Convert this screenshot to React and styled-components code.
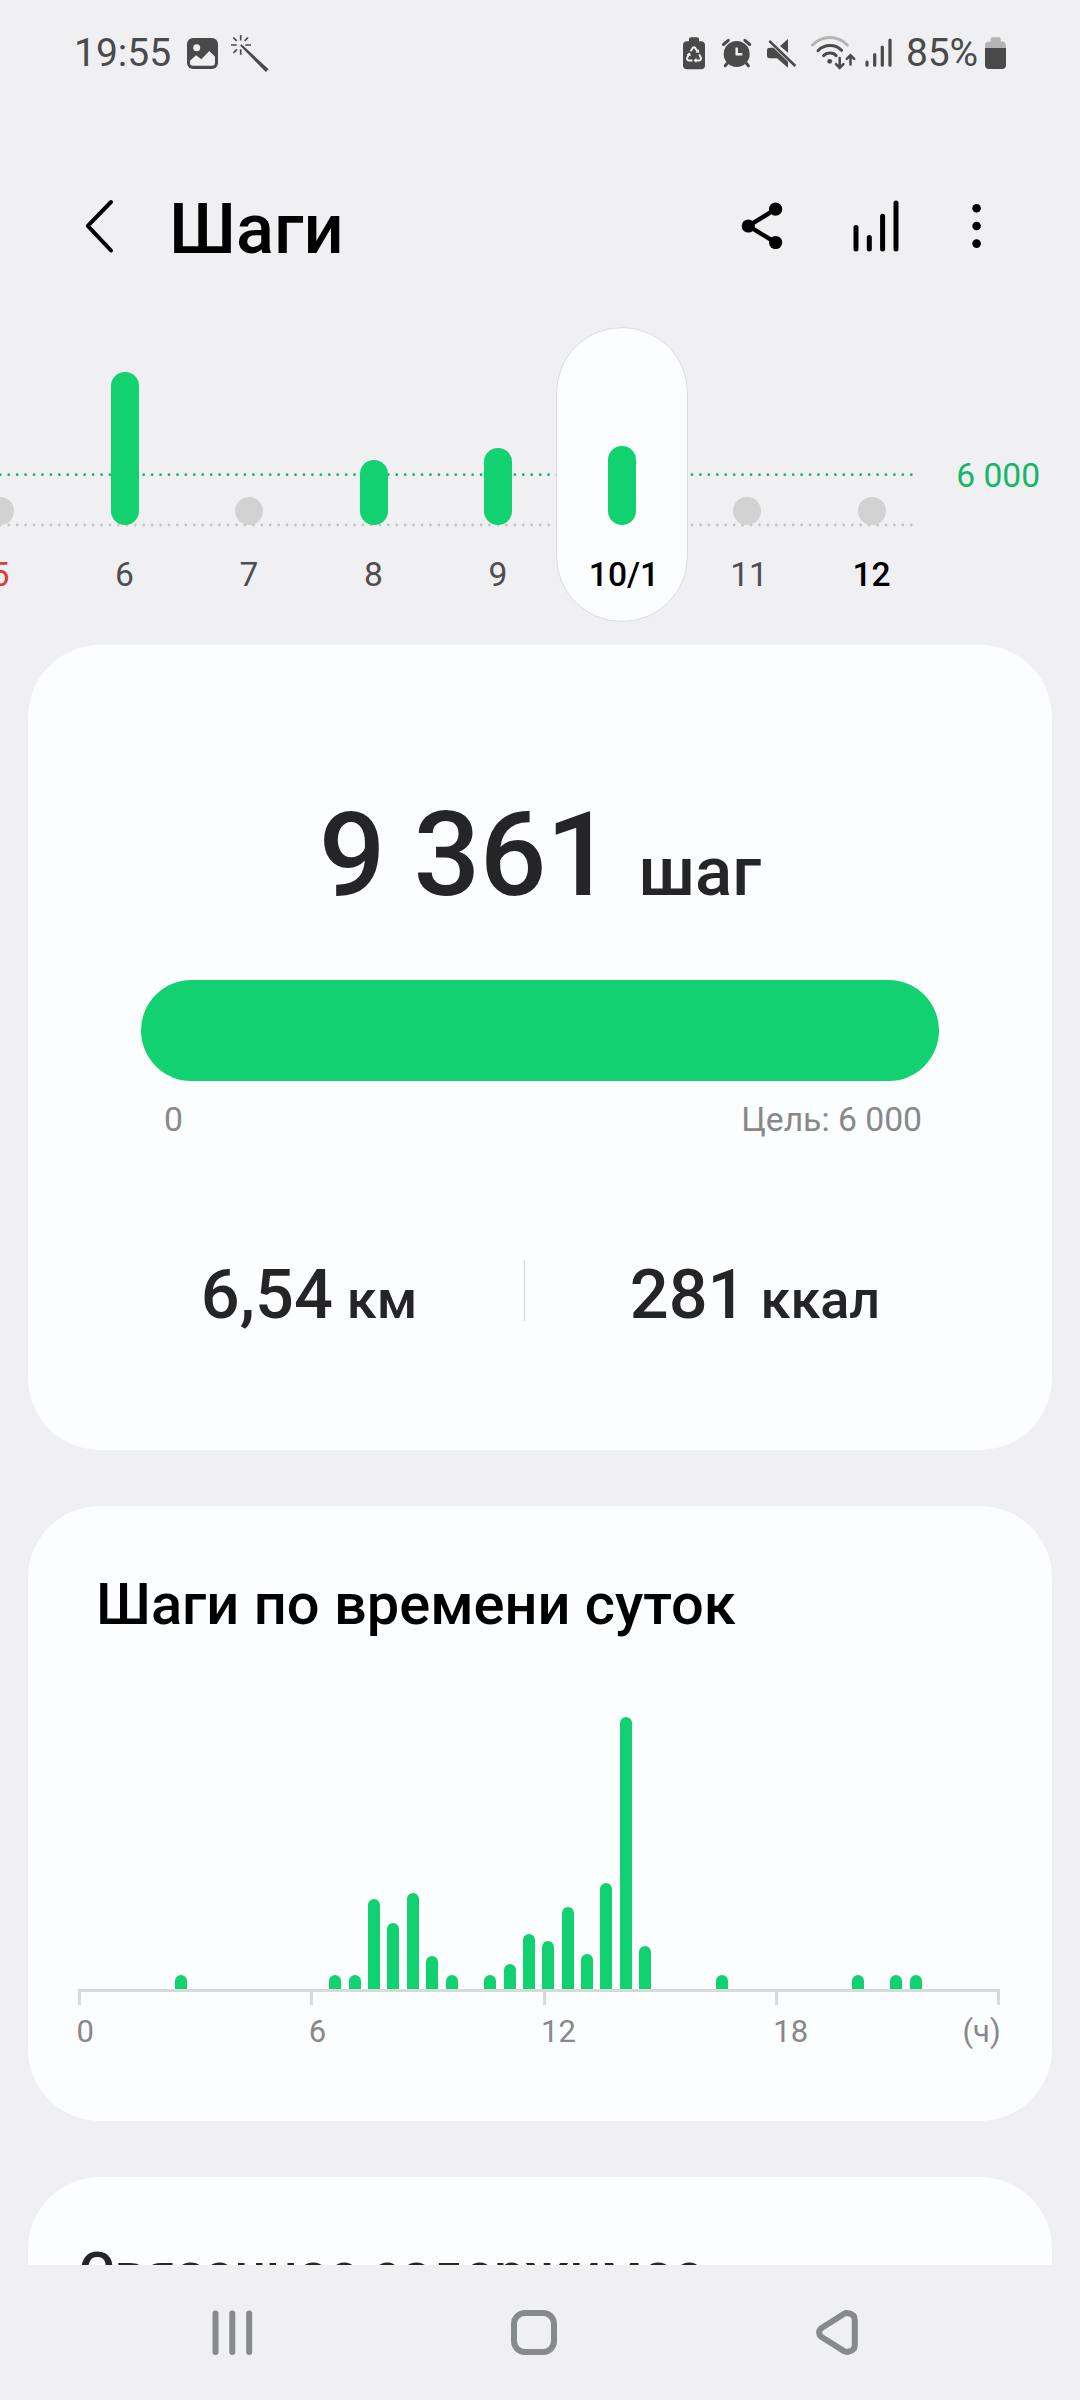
import React from 'react';
import styled, { createGlobalStyle } from 'styled-components';

const GlobalStyle = createGlobalStyle`
  body {
    margin: 0;
    background-color: #f0f0f2;
    font-family: Roboto, "Liberation Sans", sans-serif;
  }
  * {
    box-sizing: border-box;
  }
`;

const Tela = styled.div`
  display: flex;
  flex-direction: column;
  width: 1080px;
  height: 2400px;
  overflow: hidden;
  background-color: #f0f0f2;
`;

const BarraStatus = styled.div`
  display: flex;
  align-items: center;
  flex: none;
  height: 106px;
  padding: 0 73px 0 74px;
  color: #4a4a4a;
  font-size: 39px;
  white-space: nowrap;
`;

const Icone = styled.svg`
  display: block;
  flex: none;
  overflow: visible;
  margin-left: ${(props) => props.$ml || 0}px;
`;

const Espaco = styled.div`
  flex: 1;
`;

const Bateria = styled.span`
  width: 79px;
  margin-left: 13px;
  letter-spacing: -0.2px;
`;

const Cabecalho = styled.header`
  display: flex;
  align-items: center;
  flex: none;
  height: 221px;
  padding: 25px 99px 0 84px;
`;

const Titulo = styled.h1`
  margin: 0 0 0 53px;
  font-size: 70.5px;
  font-weight: 500;
  line-height: 80px;
  color: #000;
`;

const Semana = styled.div`
  position: relative;
  display: flex;
  flex: none;
  height: 295px;
  margin-bottom: 23px;
`;

const Linhas = styled.svg`
  position: absolute;
  left: 0;
  top: 0;
`;

const Dias = styled.div`
  position: relative;
  display: flex;
  flex: none;
  margin-left: -62.25px;
`;

const Dia = styled.div`
  display: flex;
  flex-direction: column;
  align-items: center;
  width: 124.5px;
  height: 295px;
`;

const DiaAtual = styled(Dia)`
  width: 132px;
  margin: 0 -3.25px 0 -4.25px;
  border: 1px solid #dcdcde;
  border-radius: 66px;
  background-color: #fcfdff;
`;

const AreaBarra = styled.div`
  display: flex;
  align-items: flex-end;
  height: ${(props) => (props.$atual ? 197 : 198)}px;
`;

const BarraDia = styled.div`
  width: 28px;
  height: ${(props) => props.$altura}px;
  border-radius: 14px;
  background-color: ${(props) => (props.$vazio ? '#d2d2d2' : '#12d170')};
`;

const NomeDia = styled.span`
  margin: 30px 0 0 ${(props) => props.$ml || 0}px;
  line-height: 40px;
  font-size: 33.6px;
  font-weight: ${(props) => (props.$forte ? 500 : 400)};
  color: ${(props) => props.$cor || '#4e4e52'};
`;

const Meta = styled.span`
  margin: 129px 0 0 22.5px;
  line-height: 40px;
  font-size: 33.6px;
  color: #16b569;
`;

const Conteudo = styled.main`
  display: flex;
  flex-direction: column;
  flex: 1;
  gap: 56px;
  min-height: 0;
  padding: 0 28px;
  overflow: hidden;
`;

const Cartao = styled.section`
  flex: none;
  height: ${(props) => props.$altura}px;
  padding-top: ${(props) => props.$topo}px;
  border-radius: 72px;
  background-color: #fcfdff;
`;

const Total = styled.div`
  display: flex;
  justify-content: center;
  align-items: baseline;
  gap: 26.5px;
  height: 120px;
  line-height: 120px;
  font-size: 117.5px;
  font-weight: 500;
  letter-spacing: -0.6px;
  color: #252528;
`;

const Unidade = styled.span`
  font-size: ${(props) => props.$tamanho}px;
  letter-spacing: 0;
`;

const Progresso = styled.div`
  height: 101px;
  margin: 65px 113px 0;
  border-radius: 50.5px;
  background-color: #12d170;
`;

const Limites = styled.div`
  display: flex;
  justify-content: space-between;
  margin: 19px 130px 0 136px;
  line-height: 40px;
  font-size: 33.7px;
  color: #88888a;
`;

const Resumo = styled.div`
  display: flex;
  height: 61px;
  margin: 120px 0 0 66px;
`;

const Valor = styled.div`
  display: flex;
  justify-content: center;
  align-items: baseline;
  gap: 14px;
  width: ${(props) => props.$largura}px;
  line-height: 69px;
  font-size: 68.5px;
  font-weight: 500;
  color: #252528;
`;

const Divisor = styled.div`
  width: 1px;
  height: 61px;
  background-color: #d4d4d6;
`;

const Subtitulo = styled.h2`
  margin: 0 0 0 ${(props) => props.$esquerda}px;
  line-height: 68px;
  font-size: ${(props) => props.$tamanho}px;
  font-weight: 500;
  color: ${(props) => props.$cor || '#000'};
  white-space: nowrap;
`;

const Grafico = styled.div`
  display: grid;
  grid-template-columns: repeat(48, 19.35px);
  justify-items: center;
  align-items: end;
  height: 282px;
  margin: 69px 0 0 46.3px;
`;

const BarraHora = styled.div`
  width: 12px;
  height: ${(props) => props.$altura}px;
  border-radius: 6px 6px 0 0;
  background-color: #12d170;
`;

const Eixo = styled.div`
  display: grid;
  grid-template-columns: 232.3px 232.3px 232.3px 1fr;
  width: 921.5px;
  height: 16px;
  margin-left: 50px;
  border-top: 3px solid #d9d9d9;
  border-right: 3px solid #d9d9d9;
`;

const Marca = styled.div`
  border-left: 3px solid #d9d9d9;
`;

const Horas = styled.div`
  display: grid;
  grid-template-columns: 232.3px 232.3px 232.3px 1fr;
  width: 924.3px;
  margin: 9px 0 0 48.4px;
  line-height: 36px;
  font-size: 31px;
  color: #88888a;
`;

const UnidadeHora = styled.span`
  display: flex;
  justify-content: space-between;
`;

const Navegacao = styled.nav`
  display: flex;
  align-items: center;
  flex: none;
  height: 135px;
  padding: 0 222px 0 211px;
`;

const dias = [
  { nome: '5', altura: 28, vazio: true, cor: '#d5413a' },
  { nome: '6', altura: 153 },
  { nome: '7', altura: 28, vazio: true },
  { nome: '8', altura: 65 },
  { nome: '9', altura: 77 },
  { nome: '10/1', altura: 79, cor: '#000', forte: true, atual: true, ml: 4 },
  { nome: '11', altura: 28, vazio: true, ml: 4 },
  { nome: '12', altura: 28, vazio: true, cor: '#000', forte: true },
];

// meia hora -> altura da barra
const passos = {
  5: 14, 13: 14, 14: 14, 15: 90, 16: 66, 17: 96, 18: 33, 19: 14,
  21: 14, 22: 25, 23: 55, 24: 48, 25: 82, 26: 35, 27: 106, 28: 272,
  29: 43, 33: 14, 40: 14, 42: 14, 43: 14,
};

const meiasHoras = Array.from({ length: 48 }, (_, i) => passos[i] || 0);

function Status() {
  return (
    <BarraStatus>
      <span>19:55</span>
      <Espaco />
      <Icone $ml={-675} width="31" height="38" viewBox="0 0 31 38">
        <rect y="4" width="31" height="31" rx="6" fill="#4a4a4a" />
        <circle cx="9.7" cy="13.7" r="3.5" fill="#f0f0f2" />
        <path d="M3 26.7L9 21.3L14.3 25.2L22.3 17L28 22.7V28.5Q28 31.7 25 31.7H6Q3 31.7 3 28.5Z" fill="#f0f0f2" />
      </Icone>
      <Icone $ml={13} width="38" height="38" viewBox="0 0 38 38" fill="none" stroke="#4a4a4a" strokeWidth="1.7">
        <path d="M9.7 1V6.5M0 11H5.7M14.3 11H20M9.7 15.3V20.7M2.3 3.5L5.7 6.9M17 3.5L13.7 6.9M2.3 19L6 15.3" />
        <path d="M9 11.6L10.6 10.2L37.6 35.2L34.8 38Z" fill="#4a4a4a" stroke="none" />
      </Icone>
      <Icone $ml={414} width="22" height="38" viewBox="0 0 22 38">
        <path d="M6 8V5Q6 3.3 8 3.3H14Q16 3.3 16 5V8Z" fill="#4a4a4a" />
        <rect y="7.2" width="22" height="28" rx="4" fill="#4a4a4a" />
        <g fill="none" stroke="#f0f0f2" strokeWidth="2" strokeLinejoin="round">
          <path d="M7.6 17.2L9.6 14.2Q11 12.3 12.4 14.2L14.6 17.6" />
          <path d="M16.2 20.4L17.7 23.4Q18.6 26.3 16 26.6H12.6" />
          <path d="M9.4 26.6H6Q3.4 26.3 4.3 23.4L6.2 19.8" />
        </g>
        <path d="M12.6 18.4L16.2 18.8L16 15.2ZM13.4 23.8V29L10.6 26.5ZM3.6 20.4L7 18.6L7.8 22.2Z" fill="#f0f0f2" />
      </Icone>
      <Icone $ml={17} width="30" height="38" viewBox="0 0 30 38" fill="none" stroke="#4a4a4a" strokeLinecap="round">
        <circle cx="14.7" cy="20" r="13" fill="#4a4a4a" stroke="none" />
        <path d="M1.5 10.5L6.3 6.3M22.9 6.3L27.7 10.5M5 29.5L3.2 31.8M24.6 29.5L26.4 31.8" strokeWidth="3" />
        <path d="M14.7 13.5V20.3H20.3" stroke="#f0f0f2" strokeWidth="2.5" strokeLinecap="butt" />
      </Icone>
      <Icone $ml={15} width="30" height="38" viewBox="0 0 30 38" fill="#4a4a4a">
        <path d="M21 5V18.7L13 11.9Z" />
        <path d="M2.5 13.7H6.5L21 27.8V33.7L10 24.3H2.5Q0 24.3 0 22V16Q0 13.7 2.5 13.7Z" />
        <path d="M2.3 6.9L28.3 32" stroke="#4a4a4a" strokeWidth="2.6" />
      </Icone>
      <Icone $ml={14} width="45" height="38" viewBox="0 0 45 38" fill="none" stroke="#4a4a4a" strokeWidth="3" strokeLinecap="round">
        <path d="M1.5 11Q9 3.6 19 3.6T36.3 11" stroke="#b4b4b5" />
        <path d="M7 16.7Q12 11.6 19 11.6T30.6 16.3" />
        <path d="M12.5 21.7Q15 19 19 19T25.2 21.7" />
        <circle cx="18.7" cy="27.3" r="2.4" fill="#4a4a4a" stroke="none" />
        <path d="M28.7 24V33.6M25 30.2L28.7 33.9L32.4 30.2M39.5 30.6V21.5M35.8 24.9L39.5 21.2L43.2 24.9" strokeWidth="2.5" />
      </Icone>
      <Icone $ml={9} width="28" height="38" viewBox="0 0 28 38" stroke="#4a4a4a" strokeWidth="3.2" strokeLinecap="round">
        <path d="M2 28V31.2M9.7 20.5V31.2M17.3 13V31.2M25 6V31.2" />
      </Icone>
      <Bateria>85%</Bateria>
      <Icone width="22" height="38" viewBox="0 0 22 38">
        <path d="M5.5 8V5Q5.5 3.3 7.5 3.3H13.7Q15.7 3.3 15.7 5V7.5H17Q21 7.5 21 11.5V14H0V11.5Q0 7.5 4 7.5Z" fill="#b4b4b5" />
        <path d="M0 14H21V31Q21 35 17 35H4Q0 35 0 31Z" fill="#4a4a4a" />
      </Icone>
    </BarraStatus>
  );
}

export default function App() {
  const listaDias = dias.map((dia) => {
    const Coluna = dia.atual ? DiaAtual : Dia;
    return (
      <Coluna key={dia.nome}>
        <AreaBarra $atual={dia.atual}>
          <BarraDia $altura={dia.altura} $vazio={dia.vazio} />
        </AreaBarra>
        <NomeDia $cor={dia.cor} $forte={dia.forte} $ml={dia.ml}>{dia.nome}</NomeDia>
      </Coluna>
    );
  });

  return (
    <Tela>
      <GlobalStyle />
      <Status />

      <Cabecalho>
        <Icone width="32" height="64" viewBox="0 0 32 64" fill="none" stroke="#000" strokeWidth="4" strokeLinecap="round" strokeLinejoin="round">
          <path d="M27 5L3.8 28.8L27 53.5" />
        </Icone>
        <Titulo>Шаги</Titulo>
        <Espaco />
        <Icone width="40" height="64" viewBox="0 0 40 64">
          <path d="M33.6 12.2L6.3 29L33.6 45.5" fill="none" stroke="#000" strokeWidth="4.4" />
          <circle cx="33.6" cy="12.2" r="6.6" />
          <circle cx="6.3" cy="29" r="6.6" />
          <circle cx="33.6" cy="45.5" r="6.6" />
        </Icone>
        <Icone $ml={71} width="46" height="64" viewBox="0 0 46 64" stroke="#000" strokeWidth="5" strokeLinecap="round">
          <path d="M3 30.5V52M16.3 40.5V52M29.6 19.2V52M43 6V52" />
        </Icone>
        <Icone $ml={73} width="9" height="64" viewBox="0 0 9 64">
          <circle cx="4.6" cy="11.2" r="4.3" />
          <circle cx="4.6" cy="29" r="4.3" />
          <circle cx="4.6" cy="46.6" r="4.3" />
        </Icone>
      </Cabecalho>

      <Semana>
        <Linhas width="914" height="295" fill="none" strokeWidth="2.8" strokeLinecap="round" strokeDasharray="0 8.435">
          <path d="M0.3 147.7H912" stroke="#16b569" />
          <path d="M0.3 198H912" stroke="#c4c4c6" />
        </Linhas>
        <Dias>{listaDias}</Dias>
        <Meta>6 000</Meta>
      </Semana>

      <Conteudo>
        <Cartao $altura={805} $topo={150}>
          <Total>
            <span>9 361</span>
            <Unidade $tamanho={69}>шаг</Unidade>
          </Total>
          <Progresso />
          <Limites>
            <span>0</span>
            <span>Цель: 6 000</span>
          </Limites>
          <Resumo>
            <Valor $largura={430}>
              <span>6,54</span>
              <Unidade $tamanho={54}>км</Unidade>
            </Valor>
            <Divisor />
            <Valor $largura={460}>
              <span>281</span>
              <Unidade $tamanho={54}>ккал</Unidade>
            </Valor>
          </Resumo>
        </Cartao>

        <Cartao $altura={615} $topo={64}>
          <Subtitulo $esquerda={68} $tamanho={57.8}>Шаги по времени суток</Subtitulo>
          <Grafico>
            {meiasHoras.map((altura, i) => <BarraHora key={i} $altura={altura} />)}
          </Grafico>
          <Eixo>
            <Marca />
            <Marca />
            <Marca />
            <Marca />
          </Eixo>
          <Horas>
            <span>0</span>
            <span>6</span>
            <span>12</span>
            <UnidadeHora>
              <span>18</span>
              <span>(ч)</span>
            </UnidadeHora>
          </Horas>
        </Cartao>

        <Cartao $altura={400} $topo={62}>
          <Subtitulo $esquerda={50.5} $tamanho={55.2} $cor="#252528">Связанное содержимое</Subtitulo>
        </Cartao>
      </Conteudo>

      <Navegacao>
        <Icone width="44" height="48" viewBox="0 0 44 48" stroke="#868a8a" strokeWidth="6" strokeLinecap="round">
          <path d="M4.5 4.5V43M21.3 4.5V43M38.2 4.5V43" />
        </Icone>
        <Icone $ml={256} width="46" height="48" viewBox="0 0 46 48" fill="none" stroke="#868a8a" strokeWidth="6">
          <rect x="3" y="4" width="40" height="39" rx="11" />
        </Icone>
        <Espaco />
        <Icone width="42" height="48" viewBox="0 0 42 48" fill="none" stroke="#868a8a" strokeWidth="6" strokeLinejoin="round">
          <path d="M5.2 19.2L27.8 5Q30 3.6 32.5 4.3Q38.8 5.6 38.8 11V36Q38.8 41.4 32.5 42.7Q30 43.4 27.8 42L5.2 27.8Q1 23.5 5.2 19.2Z" />
        </Icone>
      </Navegacao>
    </Tela>
  );
}
